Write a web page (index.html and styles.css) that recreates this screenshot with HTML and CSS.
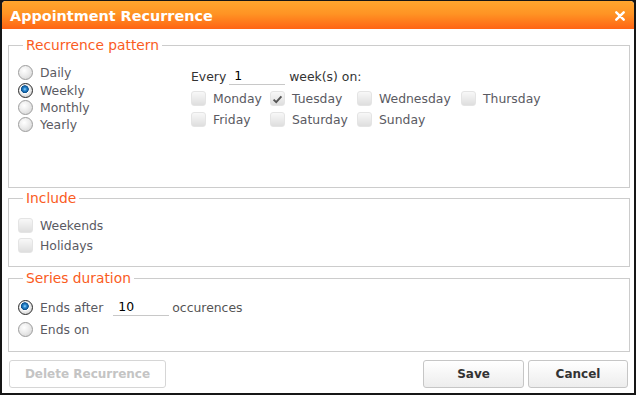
FILE: index.html
```html
<!DOCTYPE html>
<html lang="en">
<head>
    <meta charset="UTF-8">
    <title>Appointment Recurrence</title>
    <link rel="stylesheet" href="styles.css">
</head>
<body>
    <div class="dialog">
        <div class="titlebar">
            <span class="title">Appointment Recurrence</span>
            <span class="close">
                <svg width="10" height="10" viewBox="0 0 10 10"><path d="M1.3 1.3 L8.7 8.7 M8.7 1.3 L1.3 8.7" stroke="#fff" stroke-width="2.4" stroke-linecap="round"/></svg>
            </span>
        </div>

        <div class="content">
            <fieldset class="set-pattern">
                <legend>Recurrence pattern</legend>
                <div class="pattern">
                    <div class="radios">
                        <label class="row"><span class="radio"></span>Daily</label>
                        <label class="row"><span class="radio on"></span>Weekly</label>
                        <label class="row"><span class="radio"></span>Monthly</label>
                        <label class="row"><span class="radio"></span>Yearly</label>
                    </div>
                    <div class="weekly">
                        <div class="every">
                            <span>Every</span>
                            <input class="field" type="text" value="1">
                            <span>week(s) on:</span>
                        </div>
                        <div class="days">
                            <label class="day"><span class="box"></span>Monday</label>
                            <label class="day"><span class="box"><svg width="15" height="15" viewBox="0 0 15 15"><path d="M3 7.6 L6 10.6 L12 3.8" fill="none" stroke="#555" stroke-width="2.2"/></svg></span>Tuesday</label>
                            <label class="day"><span class="box"></span>Wednesday</label>
                            <label class="day"><span class="box"></span>Thursday</label>
                            <label class="day"><span class="box"></span>Friday</label>
                            <label class="day"><span class="box"></span>Saturday</label>
                            <label class="day"><span class="box"></span>Sunday</label>
                        </div>
                    </div>
                </div>
            </fieldset>

            <fieldset class="set-include">
                <legend>Include</legend>
                <div class="include">
                    <label class="inc-row"><span class="box"></span>Weekends</label>
                    <label class="inc-row"><span class="box"></span>Holidays</label>
                </div>
            </fieldset>

            <fieldset class="set-duration">
                <legend>Series duration</legend>
                <div class="duration">
                    <div class="dur-row">
                        <label class="opt"><span class="radio on"></span>Ends after</label>
                        <input class="field count" type="text" value="10">
                        <span>occurences</span>
                    </div>
                    <div class="dur-row">
                        <label class="opt"><span class="radio"></span>Ends on</label>
                    </div>
                </div>
            </fieldset>

            <div class="footer">
                <button class="btn delete" disabled>Delete Recurrence</button>
                <div class="actions">
                    <button class="btn save">Save</button>
                    <button class="btn cancel">Cancel</button>
                </div>
            </div>
        </div>
    </div>
</body>
</html>
```

FILE: styles.css
```css
/* dialog on a dark backdrop */
body {
    margin: 0;
    background-color: #161616;
    font-family: "DejaVu Sans", Verdana, sans-serif;
    font-size: 12.4px;
    color: #5a5a62;
}
.dialog {
    margin: 1px 0 0 2px;
    width: 632px;
    height: 392px;
    background-color: #ffffff;
    border-radius: 4px 4px 0 0;
    overflow: hidden;
}
.titlebar {
    height: 28px;
    padding: 0 9px 0 8px;
    display: flex;
    align-items: center;
    justify-content: space-between;
    background: linear-gradient(#ffa62e, #ff9424 45%, #ff6414);
    color: #ffffff;
}
.title {
    font-weight: bold;
    font-size: 14.4px;
    padding-top: 1px;
}
.close {
    display: flex;
    padding-top: 2px;
}
.content {
    padding: 8px 4px 0 6px;
}
fieldset {
    margin: 0;
    padding: 0 9px;
    border: 1px solid #cccccc;
}
.set-include {
    margin-top: 2px;
}
.set-duration {
    margin-top: 3px;
}
legend {
    margin-left: 5px;
    padding: 0 3px;
    font-size: 13.8px;
    line-height: 16px;
    color: #fa5c1e;
}
.pattern {
    display: flex;
    height: 134px;
}
.radios {
    width: 173px;
    padding-top: 11px;
}
.row, .opt {
    display: flex;
    align-items: center;
    gap: 7px;
    height: 17.4px;
}
.radio {
    width: 13px;
    height: 13px;
    border: 1px solid #9c9c9c;
    border-radius: 50%;
    background: radial-gradient(circle at 40% 35%, #ffffff 0, #ececec 45%, #cfcfcf 100%);
    flex-shrink: 0;
}
.radio.on {
    border-color: #2b2b2b;
    background: radial-gradient(circle at 45% 40%, #9ad6ff 0, #2a8ad2 1.6px, #0b4f8c 3.6px, #ffffff 4.2px, #f0f0f0 5px, #bcbcbc 100%);
}
.weekly {
    padding-top: 13px;
}
.every {
    display: flex;
    align-items: center;
    height: 20px;
    color: #333333;
    margin-bottom: 2px;
}
.field {
    width: 56px;
    height: 18px;
    box-sizing: border-box;
    padding: 0 0 0 5px;
    border: none;
    border-bottom: 1px solid #c8c8c8;
    font-family: inherit;
    font-size: 12.4px;
    color: #000000;
    outline: none;
}
.every .field {
    margin: 0 4px 0 3px;
}
.days {
    display: grid;
    grid-template-columns: 79px 87px 104px auto;
    grid-auto-rows: 21px;
}
.day, .inc-row {
    display: flex;
    align-items: center;
    gap: 7px;
}
.box {
    width: 15px;
    height: 15px;
    box-sizing: border-box;
    border: 1px solid #e4e4e4;
    border-radius: 3px;
    background: linear-gradient(#f8f8f8, #dedede);
    display: flex;
    flex-shrink: 0;
}
.include {
    height: 60px;
    box-sizing: border-box;
    padding-top: 9px;
}
.inc-row {
    height: 20.5px;
}
.duration {
    height: 65px;
    box-sizing: border-box;
    padding-top: 10px;
}
.dur-row {
    display: flex;
    align-items: center;
    height: 22px;
}
.opt {
    height: 22px;
}
.count {
    margin: 0 3px 0 10px;
}
.dur-row span:last-child {
    color: #555555;
}
.footer {
    display: flex;
    justify-content: space-between;
    padding: 8px 2px 0 1px;
}
.actions {
    display: flex;
    gap: 4px;
}
.btn {
    height: 28px;
    border: 1px solid #c6c6c6;
    border-radius: 3px;
    background: linear-gradient(#ffffff, #ededed);
    font-family: inherit;
    font-weight: bold;
    font-size: 12px;
    color: #333333;
    padding: 0;
}
.delete {
    width: 157px;
    color: #c4c4c4;
    border-color: #d6d6d6;
    background: #ffffff;
}
.save {
    width: 101px;
}
.cancel {
    width: 100px;
}
```
